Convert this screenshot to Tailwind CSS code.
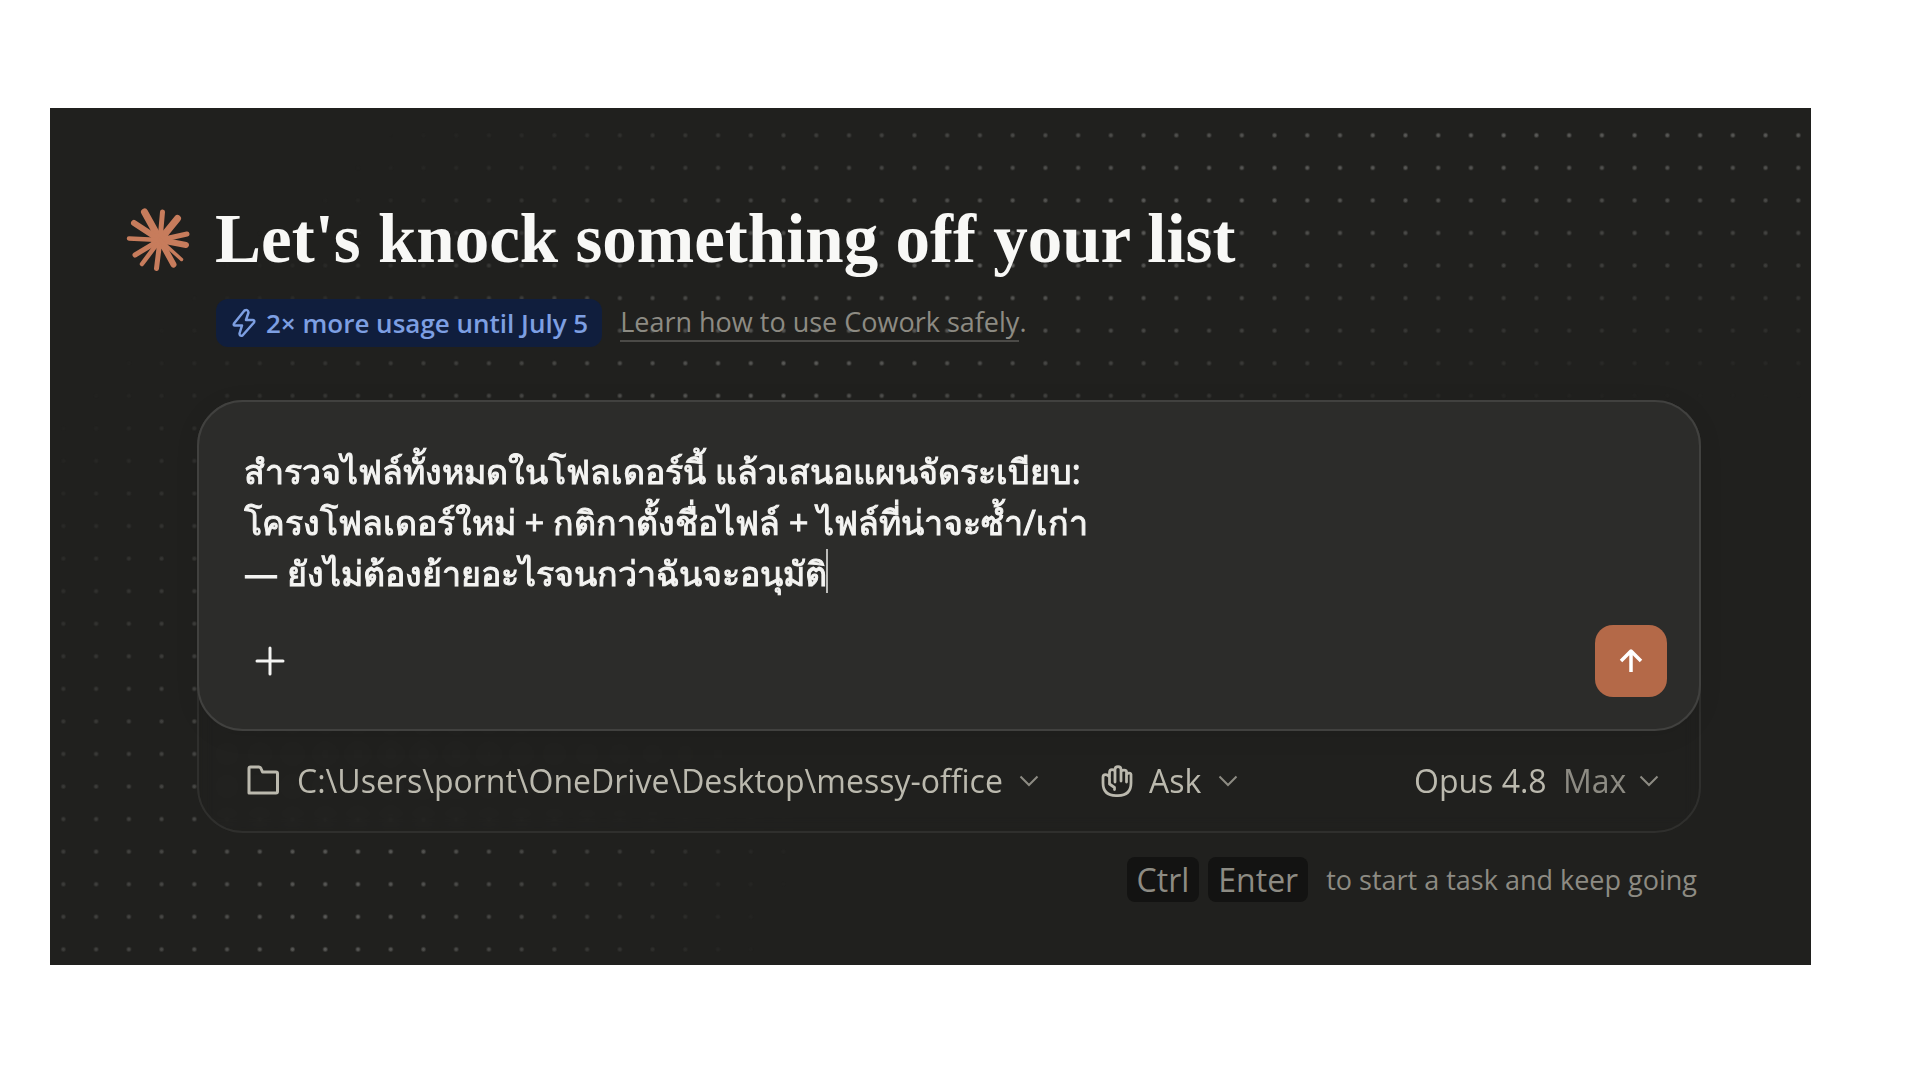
<!DOCTYPE html>
<html lang="th">
<head>
    <meta charset="UTF-8">
    <meta name="viewport" content="width=device-width, initial-scale=1.0">
    <title>Cowork - New task</title>
    <!-- TailwindCSS CDN -->
    <script src="https://cdn.jsdelivr.net/npm/@tailwindcss/browser@4"></script>
</head>
<body class="bg-white font-['Open_Sans','Noto_Sans',sans-serif] pt-[108px] pb-[115px] pl-[50px] pr-[109px]">
    <main class="relative isolate overflow-hidden bg-[#20201e] pt-[95px] pb-[63px] pl-[76px] pr-[110px]">
        <!-- Dot grid, brightest along an arc from top right to bottom left -->
        <div class="absolute -z-10 top-[11px] -bottom-[1px] -left-[3px] -right-[4px] bg-[radial-gradient(circle,#5a5a58_0,#5a5a58_1px,transparent_3px)] bg-[size:33px_33px] bg-repeat-round [mask-image:radial-gradient(83%_115%_at_99%_116%,transparent_72%,black_101%,transparent_138%)]"></div>

        <header>
            <div class="flex items-center gap-[25px]">
                <svg class="size-16 shrink-0" viewBox="0 0 64 64" fill="none" stroke="#c77c5c" stroke-linecap="round" aria-hidden="true">
                    <circle cx="34" cy="33" r="9" fill="#c77c5c" stroke="none"/>
                    <path stroke-width="7" d="M34 33L18.500 5M34 33L51.500 11.500"/>
                    <path stroke-width="6" d="M34 33L8 16M34 33L60 38M34 33L47.500 57.500"/>
                    <path stroke-width="5" d="M34 33L36.500 5M34 33L61 27M34 33L30.500 61.500M34 33L9 48"/>
                    <path stroke-width="4.500" d="M34 33L3 31.500M34 33L16 57"/>
                    <path stroke-width="3.500" d="M34 33L55.500 52.500"/>
                </svg>
                <h1 class="font-['Liberation_Serif',serif] font-bold text-[69px] leading-[72px] text-[#f8f8f6]">Let's knock something off your list</h1>
            </div>
            <div class="flex items-center gap-[18px] mt-6 ml-[90px]">
                <span class="flex items-center gap-2 h-12 px-[14px] rounded-xl bg-[#101e3d] text-[#7d9fe2] text-[26px] leading-8 font-semibold">
                    <svg class="w-7 h-8" viewBox="0 0 28 32" fill="none" stroke="currentColor" stroke-width="2.500" stroke-linejoin="round" aria-hidden="true">
                        <path d="M14.500 3.500L4 16.500Q3 18.500 5 18.500L12 18.500L9.500 26.500Q9.500 29.500 12.500 28.500L24 15.500Q25 13 22.500 13L16 13L18.500 5.500Q18 2 14.500 3.500Z"/>
                    </svg>
                    2× more usage until July 5
                </span>
                <p class="text-[27px] leading-9 text-[#8d8b83]"><a href="#" class="inline-block border-b-2 border-[#4b4a47]">Learn how to use Cowork safely</a>.</p>
            </div>
        </header>

        <form class="mt-[53px] ml-[71px]">
            <div class="rounded-[46px] border-2 border-[#2f2f2d] backdrop-blur-sm">
                <!-- Prompt card -->
                <div class="relative -mt-[2px] -mx-[2px] rounded-[46px] border-2 border-[#41413f] bg-[#2c2c2a] shadow-[0_4px_24px_#00000014] pt-11 pb-8 pl-[45px] pr-8">
                    <textarea aria-label="Task" rows="3" class="block w-full resize-none overflow-hidden outline-none text-[34px] leading-[51px] text-[#f4f4f2] [-webkit-text-stroke:1px_#f4f4f2]">สำรวจไฟล์ทั้งหมดในโฟลเดอร์นี้ แล้วเสนอแผนจัดระเบียบ:
โครงโฟลเดอร์ใหม่ + กติกาตั้งชื่อไฟล์ + ไฟล์ที่น่าจะซ้ำ/เก่า
— ยังไม่ต้องย้ายอะไรจนกว่าฉันจะอนุมัติ</textarea>
                    <span class="absolute left-[627px] top-[147px] w-[2px] h-11 bg-[#bdbdba]"></span>
                    <div class="flex items-center justify-between mt-[26px]">
                        <button type="button" aria-label="Add" class="grid place-items-center size-[52px] text-[#f4f4f2]">
                            <svg class="size-8" viewBox="0 0 32 32" fill="none" stroke="currentColor" stroke-width="3" stroke-linecap="round"><path d="M16 3v26M3 16h26"/></svg>
                        </button>
                        <button type="submit" aria-label="Send" class="grid place-items-center size-[72px] rounded-[18px] bg-[#b46948] text-white">
                            <svg class="size-8" viewBox="0 0 32 32" fill="none" stroke="currentColor" stroke-width="3.500" stroke-linejoin="round"><path d="M16 27V6M6 16L16 6L26 16"/></svg>
                        </button>
                    </div>
                </div>

                <!-- Folder, permission and model pickers -->
                <div class="flex items-center h-[100px] pl-12 pr-10 text-[32px] leading-10 text-[#bbb9ae]">
                    <label class="flex items-center">
                        <svg class="size-8 mr-[18px]" viewBox="0 0 32 32" fill="none" stroke="currentColor" stroke-width="3" stroke-linejoin="round" aria-hidden="true"><path d="M2 28V3.500Q2 2 3.500 2H12Q13.500 2 14 3.500L15.500 7H29Q30.500 7 30.500 8.500V26.500Q30.500 28 29 28H3.500Q2 28 2 26.500Z"/></svg>
                        <select aria-label="Folder" class="appearance-none outline-none"><option>C:\Users\pornt\OneDrive\Desktop\messy-office</option></select>
                        <svg class="size-5 ml-4 text-[#8d8b83]" viewBox="0 0 20 20" fill="none" stroke="currentColor" stroke-width="2"><path d="M1.500 5.500L10 14L18.500 5.500"/></svg>
                    </label>
                    <label class="flex items-center ml-[62px]">
                        <svg class="size-8 mr-4" viewBox="0 0 32 32" fill="none" stroke="currentColor" stroke-width="2.750" stroke-linecap="round" stroke-linejoin="round" aria-hidden="true"><path d="M13.500 24.500V22.500L8.500 19V7.500Q8.500 4.500 11 4.500T14 6.500V4.500Q14 1.500 17 1.500T20 4.500V7Q20 5 23 5T25.500 8V10Q25.500 8 28 8T30 11V18Q30 30.500 17 30.500H15Q2 30.500 2 18V12Q2 9.500 4.500 9.500T8.500 12M14 6.500V17M20 7V16M25.500 10V17"/></svg>
                        <select aria-label="Permission mode" class="appearance-none outline-none"><option>Ask</option></select>
                        <svg class="size-5 ml-4 text-[#8d8b83]" viewBox="0 0 20 20" fill="none" stroke="currentColor" stroke-width="2"><path d="M1.500 5.500L10 14L18.500 5.500"/></svg>
                    </label>
                    <select aria-label="Model" class="appearance-none outline-none ml-auto"><option>Opus 4.8</option></select>
                    <label class="flex items-center ml-4 text-[#8d8b83]">
                        <select aria-label="Effort" class="appearance-none outline-none"><option>Max</option></select>
                        <svg class="size-5 ml-3" viewBox="0 0 20 20" fill="none" stroke="currentColor" stroke-width="2"><path d="M1.500 5.500L10 14L18.500 5.500"/></svg>
                    </label>
                </div>
            </div>

            <p class="flex items-center justify-end mt-6 mr-1 text-[27px] leading-8 text-[#8d8b83]">
                <kbd class="font-['Open_Sans',sans-serif] h-[45px] px-[10px] mr-[9px] rounded-lg bg-[#131312] text-[32px] leading-[45px]">Ctrl</kbd>
                <kbd class="font-['Open_Sans',sans-serif] h-[45px] px-[10px] mr-[18px] rounded-lg bg-[#131312] text-[32px] leading-[45px]">Enter</kbd>
                to start a task and keep going
            </p>
        </form>
    </main>
</body>
</html>
